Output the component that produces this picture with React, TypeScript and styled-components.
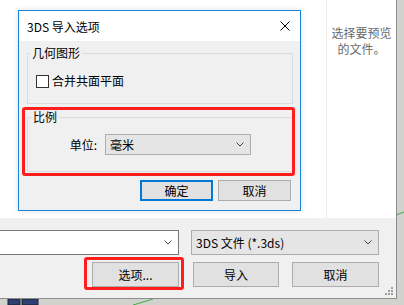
import React from "react";
import styled, { createGlobalStyle } from "styled-components";

const GlobalStyle = createGlobalStyle`
  html, body { margin: 0; padding: 0; }
  body {
    width: 404px;
    height: 305px;
    overflow: hidden;
    background: #d1d1cd;
    font-family: "Noto Sans CJK SC", "Noto Sans", sans-serif;
    font-size: 12px;
    color: #000;
  }
  #root { width: 404px; height: 305px; }
  * { box-sizing: border-box; }
`;

const Desktop = styled.div`
  position: relative;
  width: 404px;
  height: 305px;
  background: #d1d1cd;
`;

const DesktopDecor = styled.svg`
  position: absolute;
  left: 0;
  top: 0;
  z-index: 0;
`;

const Window = styled.div`
  position: relative;
  z-index: 1;
  width: 397px;
  height: 299px;
  display: flex;
  flex-direction: column;
  border-right: 1px solid #8e8e8e;
  border-bottom: 1px solid #8e8e8e;
`;

const TopArea = styled.div`
  height: 218px;
  display: flex;
  background: #fff;
`;

const FileList = styled.div`
  width: 327px;
  border-right: 1px solid #ececec;
`;

const PreviewPane = styled.div`
  flex: 1;
  padding-top: 25px;
  text-align: center;
  color: #6a6a6a;
  line-height: 16px;
`;

const BottomArea = styled.div`
  flex: 1;
  background: #f0f0f0;
  padding-top: 12px;
  display: flex;
  flex-direction: column;
  gap: 7px;
`;

const Row = styled.div`
  display: flex;
  height: 25px;
`;

const ComboBox = styled.div<{ $w: number; $white?: boolean; $ml?: number; $h?: number }>`
  width: ${(p) => p.$w}px;
  height: ${(p) => p.$h ?? 25}px;
  margin-left: ${(p) => p.$ml ?? 0}px;
  display: flex;
  align-items: center;
  justify-content: space-between;
  padding: 0 6px 0 4px;
  background: ${(p) => (p.$white ? "#fff" : "#e5e5e5")};
  border: 1px solid ${(p) => (p.$white ? "#7a7a7a" : "#adadad")};
  ${(p) => (p.$white ? "border-left: none;" : "")}
  line-height: 14px;
`;

const Button = styled.div<{ $w: number; $h?: number; $default?: boolean; $ml?: number }>`
  width: ${(p) => p.$w}px;
  height: ${(p) => p.$h ?? 25}px;
  margin-left: ${(p) => p.$ml ?? 0}px;
  display: flex;
  align-items: center;
  justify-content: center;
  background: #e1e1e1;
  border: ${(p) => (p.$default ? "2px solid #0078d7" : "1px solid #adadad")};
  line-height: 14px;
`;

const Annotated = styled.div<{ $ml?: number }>`
  position: relative;
  margin-left: ${(p) => p.$ml ?? 0}px;
`;

const RedMark = styled.div<{ $t: number; $l: number; $r: number; $b: number }>`
  position: absolute;
  top: ${(p) => p.$t}px;
  left: ${(p) => p.$l}px;
  right: ${(p) => p.$r}px;
  bottom: ${(p) => p.$b}px;
  border: 3px solid #ff1d1d;
  border-radius: 3px;
  pointer-events: none;
`;

const Dialog = styled.div`
  position: absolute;
  left: 18px;
  top: 10px;
  width: 283px;
  height: 201px;
  display: flex;
  flex-direction: column;
  background: #f0f0f0;
  border: 1px solid #1883d7;
  box-shadow: 0 0 6px rgba(0, 0, 0, 0.12);
`;

const TitleBar = styled.div`
  height: 30px;
  background: #fff;
  display: flex;
  align-items: center;
  justify-content: space-between;
  padding-left: 8px;
  padding-right: 10px;
`;

const DialogBody = styled.div`
  flex: 1;
  display: flex;
  flex-direction: column;
  padding: 5px 9px 9px 8px;
`;

const Group = styled.fieldset<{ $h: number; $pt: number; $mt?: number }>`
  margin: ${(p) => p.$mt ?? 0}px 0 0 0;
  width: 266px;
  height: ${(p) => p.$h}px;
  min-width: 0;
  border: 1px solid #dcdcdc;
  padding: ${(p) => p.$pt}px 8px 0 8px;
`;

const Legend = styled.legend<{ $ml: number }>`
  padding: 0 2px;
  margin-left: ${(p) => p.$ml}px;
  line-height: 14px;
  font-size: 12px;
`;

const CheckRow = styled.label`
  display: flex;
  align-items: center;
  gap: 3px;
  height: 14px;
  line-height: 14px;
`;

const CheckBox = styled.span`
  width: 13px;
  height: 13px;
  border: 1px solid #333;
  background: #fff;
`;

const FieldLine = styled.div`
  display: flex;
  align-items: center;
  height: 21px;
`;

const FieldLabel = styled.span`
  width: 61px;
  text-align: right;
  line-height: 14px;
`;

const DialogButtons = styled.div`
  display: flex;
  justify-content: flex-end;
  gap: 5px;
  margin-top: 8px;
`;

const Grip = styled.svg`
  position: absolute;
  right: 2px;
  bottom: 2px;
`;

const Chevron = () => (
  <svg width="8" height="5" viewBox="0 0 8 5">
    <path d="M0.5 0.5 L4 4 L7.5 0.5" fill="none" stroke="#444" strokeWidth="1" />
  </svg>
);

export default function App() {
  return (
    <>
      <GlobalStyle />
      <Desktop>
        <DesktopDecor width="404" height="305" viewBox="0 0 404 305">
          <rect x="8" y="299" width="12" height="6" fill="#2c4171" stroke="#1a1f2e" strokeWidth="1" />
          <rect x="22" y="299" width="16" height="6" fill="#2c4171" stroke="#1a1f2e" strokeWidth="1" />
          <line x1="133" y1="305" x2="153" y2="299" stroke="#3dab3d" strokeWidth="1" />
          <line x1="396" y1="215" x2="404" y2="212" stroke="#3dab3d" strokeWidth="1" />
        </DesktopDecor>
        <Window>
          <TopArea>
            <FileList />
            <PreviewPane>
              选择要预览
              <br />
              的文件。
            </PreviewPane>
          </TopArea>
          <BottomArea>
            <Row>
              <ComboBox $w={179} $white>
                <span />
                <Chevron />
              </ComboBox>
              <ComboBox $w={188} $ml={12}>
                <span>3DS 文件 (*.3ds)</span>
                <Chevron />
              </ComboBox>
            </Row>
            <Row>
              <Annotated $ml={92}>
                <Button $w={87}>选项...</Button>
                <RedMark $t={-5} $l={-8} $r={-5} $b={-3} />
              </Annotated>
              <Button $w={86} $ml={14}>导入</Button>
              <Button $w={87} $ml={13}>取消</Button>
            </Row>
          </BottomArea>
          <Grip width="10" height="10" viewBox="0 0 10 10">
            <g fill="#a0a0a0">
              <rect x="7" y="1" width="2" height="2" />
              <rect x="4" y="4" width="2" height="2" />
              <rect x="7" y="4" width="2" height="2" />
              <rect x="1" y="7" width="2" height="2" />
              <rect x="4" y="7" width="2" height="2" />
              <rect x="7" y="7" width="2" height="2" />
            </g>
          </Grip>
          <Dialog>
            <TitleBar>
              <span>3DS 导入选项</span>
              <svg width="10" height="10" viewBox="0 0 10 10">
                <path d="M0.5 0.5 L9.5 9.5 M9.5 0.5 L0.5 9.5" stroke="#000" strokeWidth="1" />
              </svg>
            </TitleBar>
            <DialogBody>
              <Group $h={58} $pt={14}>
                <Legend $ml={-6}>几何图形</Legend>
                <CheckRow>
                  <CheckBox />
                  合并共面平面
                </CheckRow>
              </Group>
              <Annotated>
                <Group $h={62} $pt={10} $mt={6}>
                  <Legend $ml={-5}>比例</Legend>
                  <FieldLine>
                    <FieldLabel>单位:</FieldLabel>
                    <ComboBox $w={146} $h={21} $ml={8}>
                      <span>毫米</span>
                      <Chevron />
                    </ComboBox>
                  </FieldLine>
                </Group>
                <RedMark $t={3} $l={-5} $r={-4} $b={-4} />
              </Annotated>
              <DialogButtons>
                <Button $w={73} $h={21} $default>确定</Button>
                <Button $w={73} $h={21}>取消</Button>
              </DialogButtons>
            </DialogBody>
          </Dialog>
        </Window>
      </Desktop>
    </>
  );
}
